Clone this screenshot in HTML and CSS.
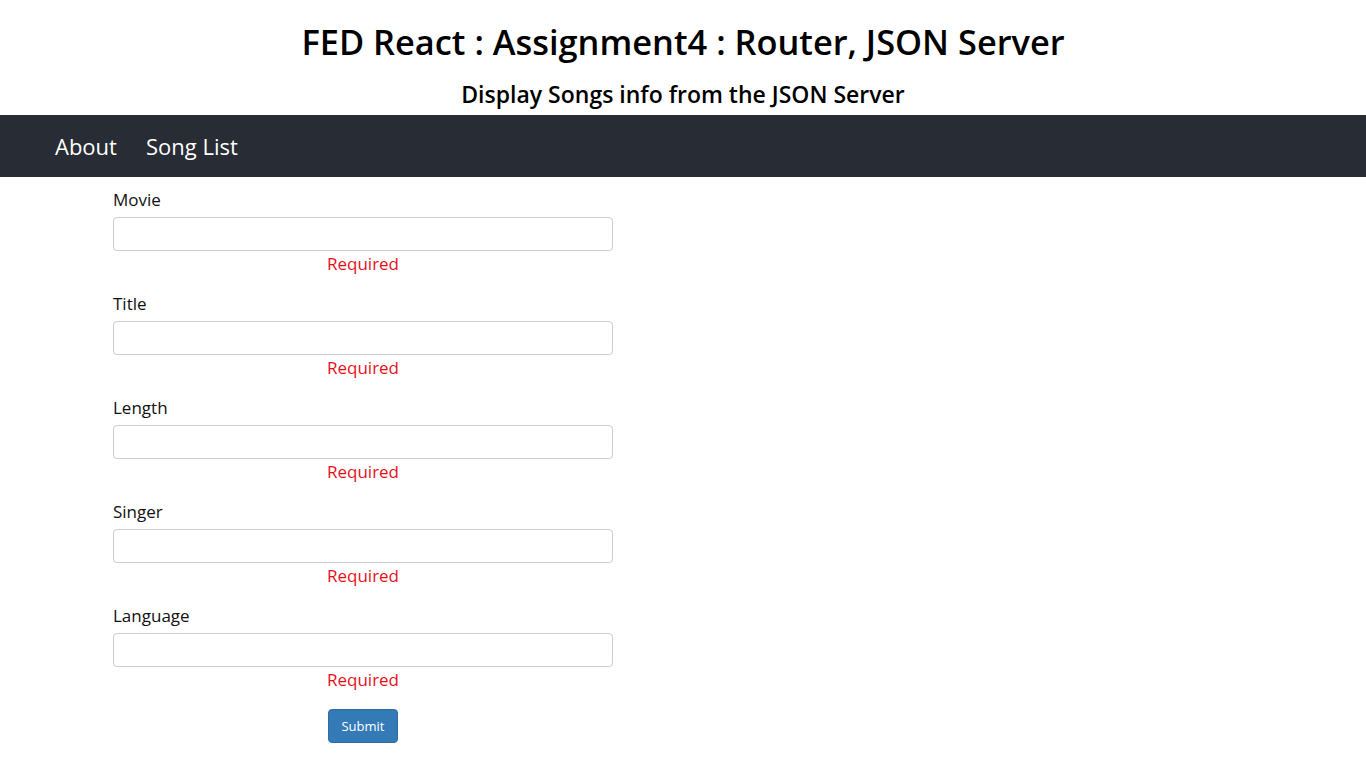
FILE: index.html
```html
<!DOCTYPE html>
<html>
<head>
<meta charset="utf-8">
<link rel="stylesheet" href="styles.css">
</head>
<body>
<header class="page-header">
  <h1 class="title">FED React : Assignment4 : Router, JSON Server</h1>
  <h3 class="subtitle">Display Songs info from the JSON Server</h3>
</header>
<nav class="navbar">
  <a class="nav-link" href="#">About</a>
  <a class="nav-link" href="#">Song List</a>
</nav>
<form class="song-form">
  <div class="field">
    <label class="field-label">Movie</label>
    <input class="field-input" type="text">
    <div class="field-error">Required</div>
  </div>
  <div class="field">
    <label class="field-label">Title</label>
    <input class="field-input" type="text">
    <div class="field-error">Required</div>
  </div>
  <div class="field">
    <label class="field-label">Length</label>
    <input class="field-input" type="text">
    <div class="field-error">Required</div>
  </div>
  <div class="field">
    <label class="field-label">Singer</label>
    <input class="field-input" type="text">
    <div class="field-error">Required</div>
  </div>
  <div class="field">
    <label class="field-label">Language</label>
    <input class="field-input" type="text">
    <div class="field-error">Required</div>
  </div>
  <div class="actions">
    <button class="btn-submit" type="button">Submit</button>
  </div>
</form>
</body>
</html>
```

FILE: styles.css
```css
* { box-sizing: border-box; }
html, body {
  margin: 0;
  padding: 0;
  background: #fff;
  font-family: "Open Sans", "Noto Sans", sans-serif;
  color: #000;
}
.page-header {
  text-align: center;
  padding-top: 20px;
}
.title {
  margin: 0;
  font-size: 34.4px;
  line-height: 44px;
  font-weight: 600;
}
.subtitle {
  margin: 14px 0 0;
  font-size: 23px;
  line-height: 32px;
  font-weight: 600;
}
.navbar {
  margin-top: 5px;
  height: 62px;
  background: #282c34;
  display: flex;
  align-items: center;
  gap: 29px;
  padding-left: 55px;
}
.nav-link {
  color: #fff;
  text-decoration: none;
  font-size: 22px;
}
.song-form {
  width: 500px;
  margin-left: 113px;
  padding-top: 11px;
  display: flex;
  flex-direction: column;
  gap: 16px;
}
.field {
  display: flex;
  flex-direction: column;
}
.field-label {
  font-size: 17px;
  line-height: 24px;
  color: #111;
}
.field-input {
  margin-top: 5px;
  height: 34px;
  width: 100%;
  border: 1px solid #ccc;
  border-radius: 4px;
  font: inherit;
  padding: 6px 12px;
}
.field-error {
  margin-top: 1px;
  text-align: center;
  color: #e8101a;
  font-size: 17px;
  line-height: 24px;
}
.actions {
  display: flex;
  justify-content: center;
  padding-top: 1px;
}
.btn-submit {
  width: 70px;
  height: 34px;
  background: #337ab7;
  border: 1px solid #2e6da4;
  border-radius: 4px;
  color: #fff;
  font-family: inherit;
  font-size: 13px;
}
```
